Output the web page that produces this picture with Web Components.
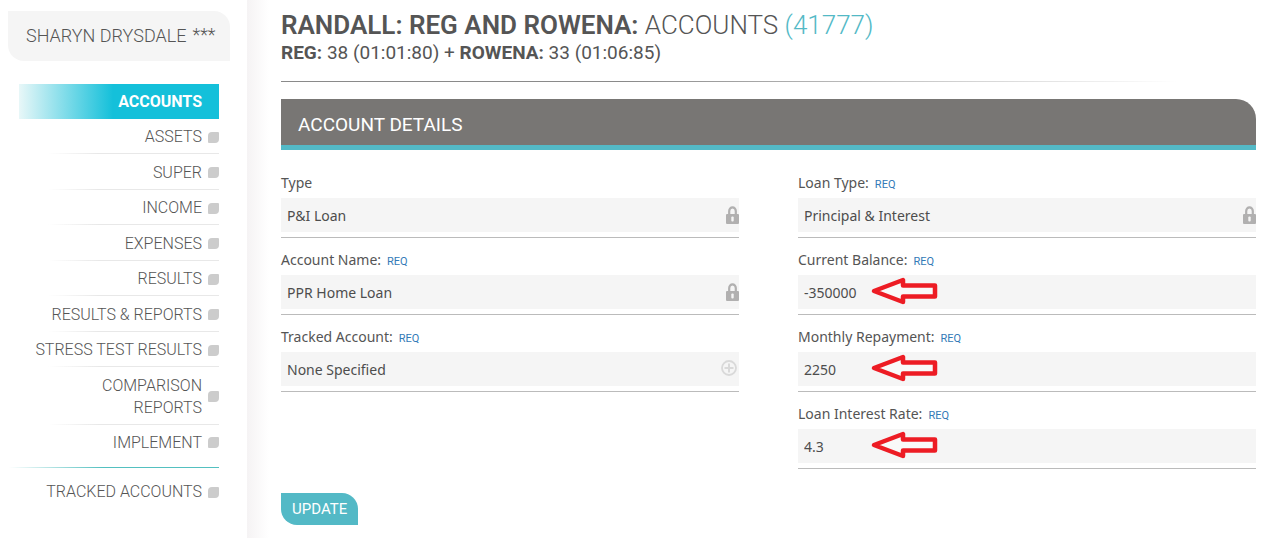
<!DOCTYPE html>
<html lang="en">
<head>
<meta charset="utf-8">
<title>Accounts</title>
<style>
  html { height: 100%; }
  body {
    margin: 0;
    background: #fff;
    color: #555;
    font-family: "Noto Sans", sans-serif;
    font-size: 14px;
    --display: Roboto, sans-serif;
    --teal: #53b9c6;
    --field: #f5f5f5;
  }
</style>
</head>
<body>
<app-shell>
  <user-badge slot="side" name="Sharyn Drysdale" mark="***"></user-badge>
  <side-nav slot="side">
    <nav-item current>Accounts</nav-item>
    <nav-item>Assets</nav-item>
    <nav-item>Super</nav-item>
    <nav-item>Income</nav-item>
    <nav-item>Expenses</nav-item>
    <nav-item>Results</nav-item>
    <nav-item>Results &amp; Reports</nav-item>
    <nav-item>Stress Test Results</nav-item>
    <nav-item>Comparison Reports</nav-item>
    <nav-item last>Implement</nav-item>
    <nav-item slot="extra" last>Tracked Accounts</nav-item>
  </side-nav>

  <client-header>
    <strong slot="client">Randall: Reg and Rowena:</strong>
    <span slot="section">Accounts</span>
    <span slot="id">(41777)</span>
    <span slot="people"><b>Reg:</b> 38 (01:01:80) + <b>Rowena:</b> 33 (01:06:85)</span>
  </client-header>
  <detail-panel heading="Account Details">
    <form-field slot="left" label="Type" value="P&amp;I Loan" icon="lock"></form-field>
    <form-field slot="left" label="Account Name:" value="PPR Home Loan" icon="lock" required></form-field>
    <form-field slot="left" label="Tracked Account:" value="None Specified" icon="plus" required></form-field>
    <form-field slot="right" label="Loan Type:" value="Principal &amp; Interest" icon="lock" required></form-field>
    <form-field slot="right" label="Current Balance:" value="-350000" pointer required></form-field>
    <form-field slot="right" label="Monthly Repayment:" value="2250" pointer required></form-field>
    <form-field slot="right" label="Loan Interest Rate:" value="4.3" pointer required></form-field>
    <action-button slot="actions">Update</action-button>
  </detail-panel>
</app-shell>

<script>
const define = (name, render) => customElements.define(name, class extends HTMLElement {
  connectedCallback() {
    if (this.shadowRoot) return;
    this.attachShadow({ mode: 'open' }).innerHTML = render(this);
  }
});
const esc = s => (s || '').replace(/&/g, '&amp;').replace(/</g, '&lt;').replace(/"/g, '&quot;');

define('app-shell', () => `
  <style>
    :host { display: flex; }
    aside { flex: 0 0 247px; min-width: 0; box-sizing: border-box; padding: 11px 17px 0 8px; }
    main {
      flex: 1; min-width: 0; padding: 10px 18px 13px 34px;
      background: linear-gradient(to right, #f5f3f4, #fff) no-repeat 0 0 / 22px 100%;
    }
  </style>
  <aside><slot name="side"></slot></aside>
  <main><slot></slot></main>`);

define('user-badge', el => `
  <style>
    :host {
      display: flex; gap: 6px; padding: 13px 12px 13px 18px;
      background: var(--field); border-radius: 0 16px 0 16px;
      font: 300 18px/24px var(--display); text-transform: uppercase; white-space: nowrap;
    }
    small { font-size: 18px; line-height: 22px; }
  </style>
  <span>${esc(el.getAttribute('name'))}</span><small>${esc(el.getAttribute('mark'))}</small>`);

define('side-nav', () => `
  <style>
    :host { display: block; padding: 23px 11px 0; }
    .list { display: flex; flex-direction: column; justify-content: space-between; min-height: 376px; }
    hr { height: 1px; border: 0; margin: 7px 0 6px -10px; background: linear-gradient(to right, transparent, #53c0c0 45%); }
  </style>
  <nav>
    <div class="list"><slot></slot></div>
    <hr>
    <slot name="extra"></slot>
  </nav>`);

define('nav-item', () => `
  <style>
    :host { display: block; font: 300 16px/22px var(--display); text-transform: uppercase; }
    a {
      display: flex; align-items: center; justify-content: flex-end; gap: 6px;
      padding: 7px 0 5px; color: inherit; text-decoration: none; text-align: right;
      border-bottom: 1px solid transparent;
      border-image: linear-gradient(to right, transparent 15%, #e8e8e8 40%) 1;
    }
    span { max-width: 170px; }
    i { flex: none; width: 11px; height: 11px; background: #ccc; border-radius: 4px 1px 4px 1px; }
    :host([last]) a { border-image: none; }
    :host([current]) { font-weight: 700; color: #fff; background: linear-gradient(to right, #e8f7f8, #14c0da 47%); }
    :host([current]) a { border-image: none; }
    :host([current]) i { background: none; }
  </style>
  <a href="#"><span><slot></slot></span><i></i></a>`);

define('client-header', () => `
  <style>
    :host { display: block; font-family: var(--display); text-transform: uppercase; color: #555; }
    h1 { margin: 0; font-size: 26px; line-height: 30px; font-weight: 300; }
    h2 { margin: 0; font-size: 19px; line-height: 26px; font-weight: 400; }
    ::slotted(strong) { font-weight: 600; }
    ::slotted([slot="id"]) { color: var(--teal); }
    hr { height: 1px; border: 0; margin: 15px 0 17px; background: linear-gradient(to right, #8a8a8a 35%, transparent 92%); }
  </style>
  <h1><slot name="client"></slot> <slot name="section"></slot> <slot name="id"></slot></h1>
  <h2><slot name="people"></slot></h2>
  <hr>`);

define('detail-panel', el => `
  <style>
    :host { display: block; }
    h3 {
      margin: 0 0 23px; padding: 13px 17px 7px; background: #787674; color: #fff;
      border-bottom: 5px solid var(--teal); border-radius: 0 20px 0 0;
      font: 400 19px/26px var(--display); text-transform: uppercase;
    }
    .columns { display: grid; grid-template-columns: 1fr 1fr; gap: 59px; }
    .column { display: flex; flex-direction: column; gap: 12px; }
    footer { margin-top: 24px; }
  </style>
  <h3>${esc(el.getAttribute('heading'))}</h3>
  <form>
    <div class="columns">
      <div class="column"><slot name="left"></slot></div>
      <div class="column"><slot name="right"></slot></div>
    </div>
    <footer><slot name="actions"></slot></footer>
  </form>`);

const icons = {
  lock: `<svg class="icon lock" width="13" height="18" viewBox="0 0 13 18" aria-hidden="true">
    <path d="M3.2 9V5a3.3 3.6 0 0 1 6.6 0v4" fill="none" stroke="#b1b0b0" stroke-width="2.2"/>
    <rect y="8" width="13" height="10" rx="1" fill="#b1b0b0"/><rect x="5.3" y="10.5" width="2.4" height="5" rx="1" fill="#f5f5f5"/></svg>`,
  plus: `<svg class="icon plus" width="16" height="16" viewBox="0 0 16 16" aria-hidden="true">
    <circle cx="8" cy="8" r="7" fill="none" stroke="#d9d9d9" stroke-width="1.8"/>
    <path d="M8 3.5v9M3.5 8h9" stroke="#d9d9d9" stroke-width="2"/></svg>`
};
const arrow = `<svg class="pointer" width="68" height="30" viewBox="0 0 68 30" aria-hidden="true">
  <path d="M4 15 33 4v5.500H65v11H33V26Z" fill="#f9f9f9" stroke="#ed1c24" stroke-width="4.500" stroke-linejoin="round"/></svg>`;

define('form-field', el => `
  <style>
    :host { display: block; border-bottom: 1px solid #bbb; padding-bottom: 5px; }
    .caption { display: flex; align-items: baseline; gap: 6px; height: 20px; line-height: 20px; margin-bottom: 5px; }
    .req { font: 400 11px/20px var(--display); color: #337ab7; }
    .box { position: relative; }
    input {
      display: block; box-sizing: border-box; width: 100%; height: 34px; margin: 0; padding: 0 6px;
      border: 0; border-radius: 0; outline: 0; background: var(--field); color: #4d4d4d; font: inherit;
    }
    .icon { position: absolute; top: 8px; right: 0; }
    .plus { right: 2px; }
    .pointer { position: absolute; top: 1px; left: 72px; }
  </style>
  <div class="caption"><label for="value">${esc(el.getAttribute('label'))}</label>${el.hasAttribute('required') ? '<span class="req">REQ</span>' : ''}</div>
  <div class="box">
    <input id="value" type="text" value="${esc(el.getAttribute('value'))}"${el.hasAttribute('icon') ? ' readonly' : ''}>
    ${icons[el.getAttribute('icon')] || ''}${el.hasAttribute('pointer') ? arrow : ''}
  </div>`);

define('action-button', () => `
  <style>
    :host { display: inline-block; vertical-align: top; }
    button {
      display: block; height: 32px; padding: 0 11px; border: 0; cursor: pointer;
      border-radius: 0 16px 0 16px; background: var(--teal); color: #fff;
      font: 400 15px/32px var(--display); text-transform: uppercase;
    }
  </style>
  <button type="button"><slot></slot></button>`);
</script>
</body>
</html>
